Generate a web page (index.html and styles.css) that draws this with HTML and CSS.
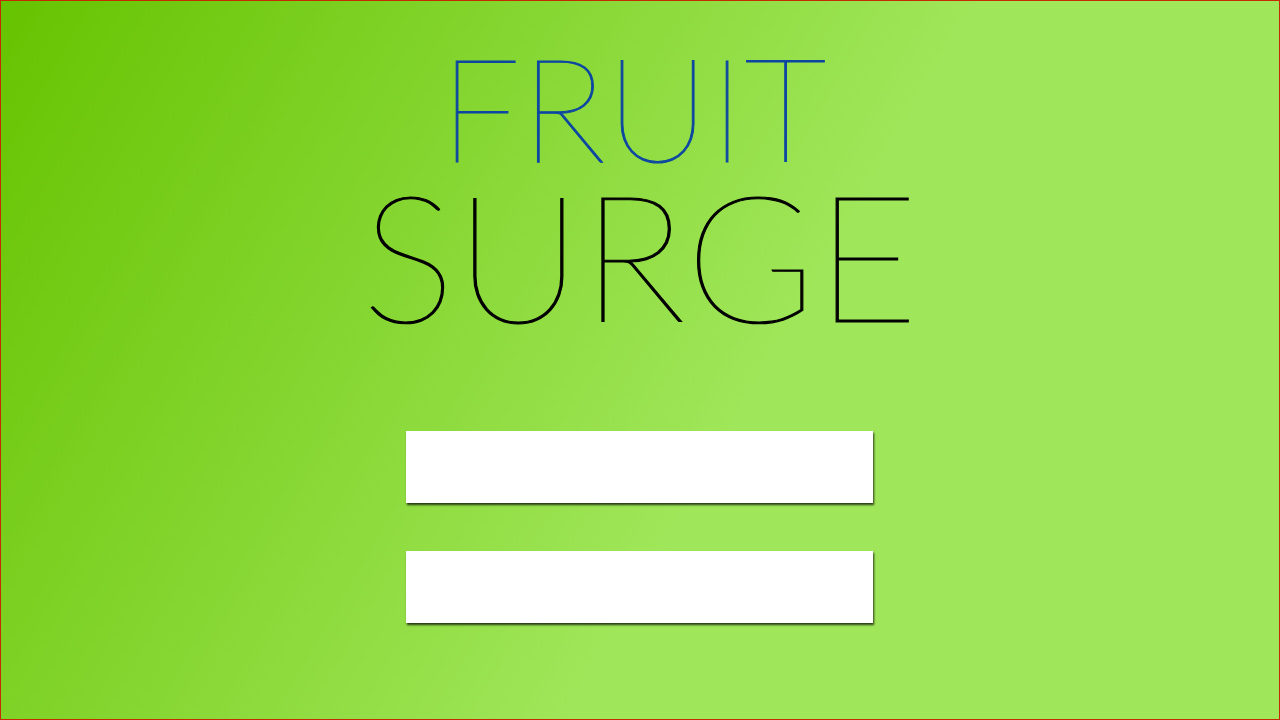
FILE: index.html
```html
<!DOCTYPE html>
<html>
<head>
<meta charset="utf-8">
<link rel="stylesheet" href="styles.css">
</head>
<body>
<div class="page">
  <h1 class="title">
    <span class="fruit">FRUIT</span>
    <span class="surge">SURGE</span>
  </h1>
  <div class="buttons">
    <div class="btn"></div>
    <div class="btn"></div>
  </div>
</div>
</body>
</html>
```
FILE: styles.css
```css
html, body {
  margin: 0;
  padding: 0;
}
.page {
  box-sizing: border-box;
  width: 1280px;
  height: 720px;
  border: 1px solid #c52a00;
  background: linear-gradient(120deg, #66c300 0%, #a0e65a 58%, #a0e65a 100%);
  display: flex;
  flex-direction: column;
  align-items: center;
  font-family: "Lato", "Liberation Sans", sans-serif;
}
.title {
  margin: 0;
  font-weight: 100;
  display: flex;
  flex-direction: column;
  align-items: center;
}
.fruit {
  color: #0d47a1;
  -webkit-text-stroke: 1px #0d47a1;
  font-size: 144px;
  line-height: 130px;
  height: 130px;
  margin-top: 41px;
  margin-right: 14px;
  font-weight: 100;
}
.surge {
  color: #000;
  -webkit-text-stroke: 1.2px #000;
  font-size: 176px;
  line-height: 164px;
  height: 164px;
  font-weight: 100;
}
.buttons {
  display: flex;
  flex-direction: column;
  gap: 48px;
  margin-top: 95px;
  margin-right: 2px;
}
.btn {
  width: 467px;
  height: 72px;
  background: #fff;
  box-shadow: 1px 2px 2px rgba(0, 0, 0, 0.75);
}
```
